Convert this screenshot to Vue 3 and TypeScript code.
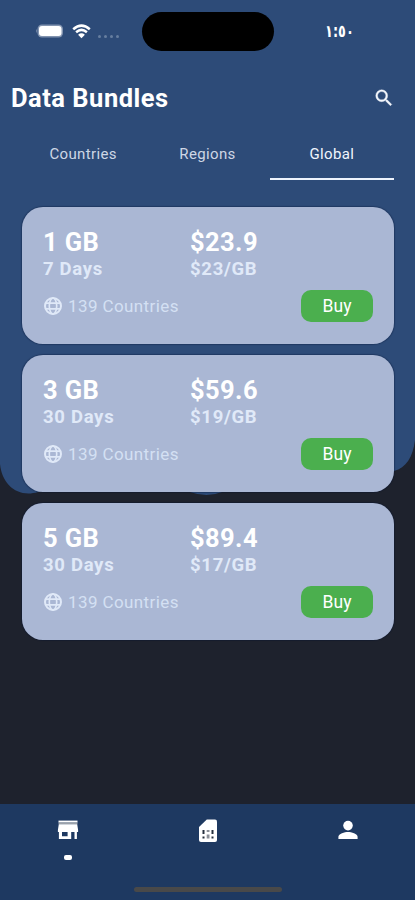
<script setup lang="ts">
import { ref } from 'vue'

interface Bundle {
  size: string
  price: string
  duration: string
  rate: string
}

const tabs: string[] = ['Countries', 'Regions', 'Global']
const activeTab = ref<string>('Global')

const bundles: Bundle[] = [
  { size: '1 GB', price: '$23.9', duration: '7 Days', rate: '$23/GB' },
  { size: '3 GB', price: '$59.6', duration: '30 Days', rate: '$19/GB' },
  { size: '5 GB', price: '$89.4', duration: '30 Days', rate: '$17/GB' },
]
</script>

<template>
  <div class="screen">
    <svg class="backdrop" viewBox="0 0 415 500" aria-hidden="true">
      <path d="M0 0H415V440C413 457 406 468 394 471C340 478 270 480 222 492Q207 498 190 492C140 474 80 480 38 492C18 498 2 485 0 464Z" fill="#2d4b78" />
    </svg>

    <div class="status">
      <div class="indicators">
        <svg class="battery" width="29" height="16" viewBox="0 0 29 16">
          <rect x="2.5" y="1.5" width="25.5" height="13" rx="4.5" fill="#8294b0" />
          <path d="M1.8 5.8Q0 8 1.8 10.2Z" fill="#8294b0" />
          <rect x="4" y="3" width="22.5" height="10" rx="3" fill="#fff" />
        </svg>
        <svg class="wifi" width="19" height="15" viewBox="0 0 19 15">
          <path d="M1.2 5.2Q9.5-2 17.8 5.2M4.1 8.2Q9.5 3.6 14.9 8.2" fill="none" stroke="#fff" stroke-width="2.5" />
          <path d="M6.1 10.8Q9.5 7.9 12.9 10.8L9.5 14.2Z" fill="#fff" />
        </svg>
        <span class="signal"><i></i><i></i><i></i><i></i></span>
      </div>
      <div class="island"></div>
      <div class="clock"><span>١:٥٠</span></div>
    </div>

    <header class="header">
      <h1>Data Bundles</h1>
      <svg width="22" height="22" viewBox="0 0 24 24" fill="#f4f7fc" stroke="#f4f7fc" stroke-width=".4">
        <path d="M15.5 14h-.79l-.28-.27A6.47 6.47 0 0 0 16 9.5 6.5 6.5 0 1 0 9.5 16c1.61 0 3.09-.59 4.23-1.57l.27.28v.79l5 4.99L20.49 19l-4.99-5zm-6 0a4.5 4.5 0 1 1 0-9 4.5 4.5 0 0 1 0 9z" />
      </svg>
    </header>

    <nav class="tabs">
      <button
        v-for="tab in tabs"
        :key="tab"
        class="tab"
        :class="{ active: tab === activeTab }"
        @click="activeTab = tab"
      >{{ tab }}</button>
    </nav>

    <main class="list">
      <article v-for="bundle in bundles" :key="bundle.size" class="card">
        <div class="row main-row"><span>{{ bundle.size }}</span><span>{{ bundle.price }}</span></div>
        <div class="row sub-row"><span>{{ bundle.duration }}</span><span>{{ bundle.rate }}</span></div>
        <div class="footer">
          <svg width="20" height="20" viewBox="0 0 20 20" fill="none" stroke="#e0e9f8">
            <circle cx="10" cy="10" r="8" stroke-width="2" />
            <ellipse cx="10" cy="10" rx="3.7" ry="8" stroke-width="1.6" />
            <path d="M2.5 7.2H17.5M2.5 12.8H17.5" stroke-width="1.7" />
          </svg>
          <span class="coverage">139 Countries</span>
          <button class="buy">Buy</button>
        </div>
      </article>
    </main>

    <nav class="bottom">
      <div class="item">
        <svg width="24" height="24" viewBox="0 0 24 24" fill="#fff">
          <path d="M2.5 2.6h19v2h-19z" />
          <path d="M2.5 4.6h19v1.7h-19z" fill="#9ba1a9" />
          <path d="M2.8 6.3h18.4l.9 5.6v2h-1.2V21h-2.4v-7.1h-3.3V21H2.9v-7.1H1.9v-2zM6 14v4.3h5.6V14z" fill-rule="evenodd" />
        </svg>
        <span class="dot"></span>
      </div>
      <div class="item">
        <svg width="24" height="26" viewBox="0 0 24 26">
          <path d="M10.8 1.5H19Q21 1.5 21 3.5V22Q21 24 19 24H5Q3 24 3 22V9Z" fill="#fff" />
          <path d="M6.5 12h2v4h-2zM15.5 12h2v4h-2zM6.5 18.5h2v2h-2zM15.5 18.5h2v2h-2z" fill="#26303e" />
          <path d="M10.7 12h2.8v2h-2.8zM10.7 16.5h2.8v4h-2.8z" fill="#8c9098" />
        </svg>
      </div>
      <div class="item">
        <svg width="24" height="24" viewBox="0 0 24 24" fill="#fff">
          <circle cx="12" cy="7.6" r="4.8" />
          <path d="M2.4 21v-2.2c0-3.1 6.3-4.9 9.6-4.9s9.6 1.8 9.6 4.9V21z" />
        </svg>
      </div>
      <div class="home-bar"></div>
    </nav>
  </div>
</template>

<style>
body {
  margin: 0;
  background: #1e222d;
}
</style>

<style scoped>
.screen {
  position: relative;
  display: flex;
  flex-direction: column;
  height: 900px;
  overflow: hidden;
  background: #1e222d;
  color: #fff;
  font-family: Roboto, "Noto Sans", sans-serif;
}
.backdrop {
  position: absolute;
  top: 0;
  left: 0;
  width: 415px;
  height: 500px;
}
.status,
.header,
.tabs,
.list,
.bottom {
  position: relative;
  box-sizing: border-box;
}
.status {
  display: grid;
  grid-template-columns: 142px 132px 1fr;
  height: 63px;
  padding-top: 12px;
}
.indicators {
  display: flex;
  align-items: center;
  height: 38px;
  padding-left: 35px;
}
.wifi {
  margin-left: 8px;
}
.signal {
  display: flex;
  gap: 3px;
  margin: 10px 0 0 7px;
}
.signal i {
  width: 3px;
  height: 3px;
  border-radius: 50%;
  background: #667e9f;
}
.island {
  height: 39px;
  border-radius: 20px;
  background: #000;
}
.clock {
  padding-left: 51px;
  font: 600 17px/38px "DejaVu Sans", sans-serif;
}
.clock span {
  display: inline-block;
  direction: ltr;
  unicode-bidi: bidi-override;
  transform: scaleX(0.76);
  transform-origin: left;
}
.header {
  display: flex;
  align-items: center;
  justify-content: space-between;
  height: 70px;
  padding: 0 20px 0 11px;
}
h1 {
  margin: 0;
  font-size: 25.5px;
  font-weight: 700;
  letter-spacing: 0.5px;
}
.tabs {
  display: grid;
  grid-template-columns: repeat(3, 1fr);
  height: 47px;
  margin: 0 21px 1px;
}
button {
  padding: 0;
  border: 0;
  color: inherit;
  font-family: inherit;
}
.tab {
  height: 47px;
  padding-bottom: 3px;
  border-bottom: 2px solid transparent;
  background: none;
  color: #ced7e5;
  font-size: 15px;
  letter-spacing: 0.35px;
}
.tab.active {
  border-color: #edf3fc;
  color: #f0f5fd;
}
.list {
  display: flex;
  flex: 1;
  flex-direction: column;
  gap: 11px;
  padding: 25.5px 21px 0 22px;
}
.card {
  box-sizing: border-box;
  height: 137px;
  padding: 20.5px 21px 0;
  border-radius: 21px;
  background: #aab7d4;
  box-shadow: 0 0 1px 1px rgba(0, 15, 50, 0.3);
}
.row {
  display: grid;
  grid-template-columns: 147px 1fr;
  font-weight: 700;
}
.main-row {
  font-size: 25.5px;
  line-height: 31px;
  letter-spacing: 0.4px;
}
.sub-row {
  color: #e0e9f8;
  font-size: 18.5px;
  line-height: 22px;
  letter-spacing: 0.7px;
}
.footer {
  display: flex;
  align-items: center;
  margin-top: 9.5px;
  color: #d4e0f3;
}
.coverage {
  flex: 1;
  margin-left: 5px;
  font-size: 17px;
  letter-spacing: 0.4px;
}
.buy {
  width: 72px;
  height: 32.5px;
  border-radius: 10px;
  background: #4baf4e;
  color: #fff;
  font-size: 17.5px;
}
.bottom {
  display: grid;
  grid-template-columns: 136px 144px 136px;
  height: 96px;
  background: #1e3961;
}
.item {
  display: flex;
  flex-direction: column;
  align-items: center;
  padding-top: 14px;
}
.dot {
  width: 8px;
  height: 5px;
  margin-top: 13px;
  border-radius: 2px;
  background: #fff;
}
.home-bar {
  position: absolute;
  bottom: 8px;
  left: 134px;
  width: 148px;
  height: 5px;
  border-radius: 3px;
  background: #494949;
}
</style>
